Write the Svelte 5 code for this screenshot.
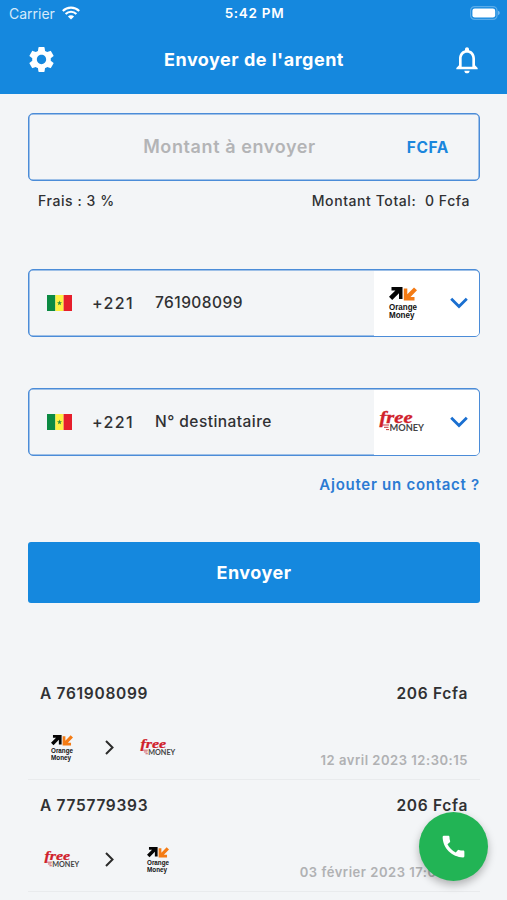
<script>
  let dialCode = "+221";

  let accounts = [
    { value: "761908099", operator: "orange" },
    { value: "N° destinataire", operator: "free" },
  ];

  let transfers = [
    {
      label: "A 761908099",
      amount: "206 Fcfa",
      from: "orange",
      to: "free",
      date: "12 avril 2023 12:30:15",
    },
    {
      label: "A 775779393",
      amount: "206 Fcfa",
      from: "free",
      to: "orange",
      date: "03 février 2023 17:08:42",
    },
  ];
</script>

{#snippet logo(operator)}
  {#if operator === "orange"}
    <svg class="logo-orange" viewBox="0 0 28 33">
      <path d="M2.5 0H13.5V12H10V6.2L3.2 13L0 9.8L6.4 3.5H2.5Z" fill="#050505" />
      <path d="M25.5 13.5H14.8V1.5H18.3V7.3L25 0.4L28 3.2L21.5 10H25.5Z" fill="#f47b14" />
      <text x="0" y="23.4" textLength="28" lengthAdjust="spacingAndGlyphs">Orange</text>
      <text x="0" y="31.4" textLength="25.5" lengthAdjust="spacingAndGlyphs">Money</text>
    </svg>
  {:else}
    <svg class="logo-free" viewBox="0 0 46 20">
      <text class="free" x="0.5" y="10.8" textLength="33" lengthAdjust="spacingAndGlyphs">free</text>
      <path d="M2.5 13H10M5 15.3H9.5M7 17.6H10" stroke="#c8333a" stroke-width="1" />
      <text class="money" x="10.5" y="19.4" textLength="34.5" lengthAdjust="spacingAndGlyphs">MONEY</text>
    </svg>
  {/if}
{/snippet}

<div class="screen">
  <header>
    <div class="status">
      <div class="carrier">
        <span>Carrier</span>
        <svg width="18" height="14" viewBox="0 0 18 14" fill="none" stroke="#fff" stroke-width="2.1">
          <path d="M0.8 4.9A11.8 11.8 0 0 1 17.2 4.9" />
          <path d="M3.6 8A7.7 7.7 0 0 1 14.4 8" />
          <path d="M9 13.6L5.9 10.5A4.4 4.4 0 0 1 12.1 10.5Z" fill="#fff" stroke="none" />
        </svg>
      </div>
      <div class="time">5:42 PM</div>
      <div class="battery">
        <svg width="30" height="14" viewBox="0 0 30 14">
          <rect x="0.6" y="0.6" width="26.4" height="12.8" rx="4" fill="none" stroke="#5aace9" stroke-width="1.2" />
          <rect x="2.4" y="2.4" width="22.8" height="9.2" rx="2.3" fill="#fff" />
          <path d="M28 4.8Q29.8 5.4 29.8 7T28 9.2Z" fill="#73b9ee" />
        </svg>
      </div>
    </div>
    <div class="appbar">
      <svg width="31" height="31" viewBox="0 0 24 24" fill="#fff">
        <path
          d="M19.14 12.94c.04-.3.06-.61.06-.94 0-.32-.02-.64-.07-.94l2.03-1.58a.49.49 0 0 0 .12-.61l-1.92-3.32a.488.488 0 0 0-.59-.22l-2.39.96c-.5-.38-1.03-.7-1.62-.94l-.36-2.54a.484.484 0 0 0-.48-.41h-3.84c-.24 0-.43.17-.47.41l-.36 2.54c-.59.24-1.13.57-1.62.94l-2.39-.96c-.22-.08-.47 0-.59.22L2.74 8.87c-.12.21-.08.47.12.61l2.03 1.58c-.05.3-.09.63-.09.94s.02.64.07.94l-2.03 1.58a.49.49 0 0 0-.12.61l1.92 3.32c.12.22.37.29.59.22l2.39-.96c.5.38 1.03.7 1.62.94l.36 2.54c.05.24.24.41.48.41h3.84c.24 0 .44-.17.47-.41l.36-2.54c.59-.24 1.13-.56 1.62-.94l2.39.96c.22.08.47 0 .59-.22l1.92-3.32c.12-.22.07-.47-.12-.61l-2.01-1.58zM12 15.6c-1.98 0-3.6-1.62-3.6-3.6s1.62-3.6 3.6-3.6 3.6 1.62 3.6 3.6-1.62 3.6-3.6 3.6z"
        />
      </svg>
      <h1>Envoyer de l'argent</h1>
      <svg width="32" height="32" viewBox="0 0 24 24" fill="#fff">
        <path
          d="M12 22c1.1 0 2-.9 2-2h-4c0 1.1.9 2 2 2zm6-6v-5c0-3.07-1.63-5.64-4.5-6.32V4c0-.83-.67-1.5-1.5-1.5s-1.5.67-1.5 1.5v.68C7.64 5.36 6 7.92 6 11v5l-2 2v1h16v-1l-2-2zm-2 1H8v-6c0-2.48 1.51-4.5 4-4.5s4 2.02 4 4.5v6z"
        />
      </svg>
    </div>
  </header>

  <main>
    <div class="field amount">
      <span class="placeholder">Montant à envoyer</span>
      <span class="currency">FCFA</span>
    </div>
    <div class="fees">
      <span>Frais : 3 %</span>
      <span class="total">Montant Total:&nbsp; 0 Fcfa</span>
    </div>

    {#each accounts as account}
      <div class="field account">
        <svg class="flag" width="25" height="16" viewBox="0 0 25 16">
          <rect width="8.4" height="16" fill="#0b8a43" />
          <rect x="8.4" width="8.2" height="16" fill="#fdf042" />
          <rect x="16.6" width="8.4" height="16" fill="#e61e2b" />
          <path
            d="M12.5 5.5L13.1 7.3H15L13.5 8.4L14.1 10.3L12.5 9.2L10.9 10.3L11.5 8.4L10 7.3H11.9Z"
            fill="#2c8b3d"
          />
        </svg>
        <span class="dial">{dialCode}</span>
        <span class="value">{account.value}</span>
        <div class="operator {account.operator}">
          <div class="mark">{@render logo(account.operator)}</div>
          <svg width="18" height="12" viewBox="0 0 18 12" fill="none" stroke="#1a6fd0" stroke-width="2.8">
            <path d="M1.2 1.8L9 9.6L16.8 1.8" />
          </svg>
        </div>
      </div>
    {/each}

    <div class="add-contact">Ajouter un contact ?</div>
    <button>Envoyer</button>

    <div class="transfers">
      {#each transfers as transfer}
        <div class="transfer">
          <div class="line">
            <span>{transfer.label}</span>
            <span class="sum">{transfer.amount}</span>
          </div>
          <div class="route">
            <div class="small {transfer.from}">{@render logo(transfer.from)}</div>
            <svg width="9" height="15" viewBox="0 0 9 15" fill="none" stroke="#2b2b2b" stroke-width="2">
              <path d="M1 1L7.5 7.5L1 14" />
            </svg>
            <div class="small {transfer.to}">{@render logo(transfer.to)}</div>
            <span class="date">{transfer.date}</span>
          </div>
        </div>
      {/each}
    </div>
  </main>

  <div class="call">
    <svg width="29" height="29" viewBox="0 0 24 24" fill="#fff">
      <path
        d="M20.01 15.38c-1.23 0-2.42-.2-3.53-.56a.977.977 0 0 0-1.01.24l-1.57 1.97c-2.83-1.35-5.48-3.9-6.89-6.83l1.95-1.66c.27-.28.35-.67.24-1.02-.37-1.11-.56-2.3-.56-3.53 0-.54-.45-.99-.99-.99H4.19C3.65 3 3 3.24 3 3.99 3 13.28 10.73 21 20.01 21c.71 0 .99-.63.99-1.18v-3.45c0-.54-.45-.99-.99-.99z"
      />
    </svg>
  </div>
</div>

<style>
  :global(body) {
    overflow: hidden;
  }

  .screen {
    position: relative;
    box-sizing: border-box;
    width: 507px;
    height: 900px;
    overflow: hidden;
    background: #f3f5f7;
    color: #303133;
    font-family: Inter, sans-serif;
    white-space: nowrap;
  }

  svg {
    display: block;
    flex: none;
    overflow: visible;
  }

  header {
    height: 94px;
    background: #1588de;
    color: #fff;
  }

  .status {
    display: grid;
    grid-template-columns: 1fr auto 1fr;
    align-items: center;
    height: 26px;
    padding: 0 7px 0 9px;
  }

  .carrier {
    display: flex;
    align-items: center;
    gap: 7px;
    font-size: 14px;
    color: #d5eafa;
  }

  .time {
    font-size: 13.5px;
    font-weight: 600;
    letter-spacing: 0.7px;
  }

  .battery {
    display: flex;
    justify-content: flex-end;
  }

  .appbar {
    display: flex;
    align-items: center;
    justify-content: space-between;
    height: 67px;
    padding: 0 24px 0 26px;
  }

  h1 {
    margin: 0;
    font-size: 18px;
    font-weight: 700;
    letter-spacing: 0.5px;
  }

  main {
    padding: 19px 27px 0 28px;
  }

  .field {
    display: flex;
    align-items: center;
    box-sizing: border-box;
    height: 68px;
    border: 1px solid #4b8cd8;
    border-radius: 5px;
    box-shadow: inset 0 0 0 0.5px #4b8cd8;
  }

  .amount {
    justify-content: flex-end;
    padding: 0 30px 2px 0;
  }

  .placeholder {
    margin-right: 91px;
    font-size: 18px;
    font-weight: 600;
    letter-spacing: 0.6px;
    color: #b3b4b6;
  }

  .currency {
    padding-top: 2px;
    font-size: 15.5px;
    font-weight: 700;
    letter-spacing: 0.6px;
    color: #1a86dd;
  }

  .fees {
    display: flex;
    justify-content: space-between;
    height: 20px;
    margin-top: 10px;
    margin-bottom: 58px;
    padding: 0 10px;
    font-size: 14px;
    font-weight: 500;
    line-height: 20px;
    letter-spacing: 0.58px;
  }

  .account {
    padding-left: 18px;
    margin-bottom: 51px;
  }

  .dial {
    width: 63px;
    margin-left: 20px;
    font-size: 16px;
    font-weight: 500;
    letter-spacing: 1.4px;
  }

  .value {
    flex: 1;
    padding-bottom: 2px;
    font-size: 15.5px;
    font-weight: 500;
    letter-spacing: 0.45px;
  }

  .operator {
    display: flex;
    align-items: center;
    justify-content: space-between;
    box-sizing: border-box;
    width: 105px;
    height: 65px;
    padding-right: 11px;
    border-radius: 0 4px 4px 0;
    background: #fff;
  }

  .mark {
    width: 28px;
    margin-left: 15px;
  }

  .free .mark {
    width: 46px;
    margin-left: 5px;
  }

  .logo-orange,
  .logo-free {
    width: 100%;
  }

  .logo-orange text {
    font-family: "Liberation Sans", sans-serif;
    font-size: 8.6px;
    font-weight: 700;
    fill: #111;
  }

  .logo-free .free {
    font-family: "Liberation Serif", serif;
    font-size: 16px;
    font-style: italic;
    font-weight: 700;
    fill: #d0202a;
    stroke: #d0202a;
    stroke-width: 0.3px;
  }

  .logo-free .money {
    font-family: Lato, sans-serif;
    font-size: 9.5px;
    font-weight: 700;
    fill: #444;
  }

  .add-contact {
    margin-top: -32px;
    font-size: 15px;
    font-weight: 600;
    line-height: 20px;
    letter-spacing: 0.73px;
    text-align: right;
    color: #2b7bd3;
  }

  button {
    display: block;
    width: 100%;
    height: 61px;
    margin-top: 47px;
    border: 0;
    border-radius: 3px;
    background: #1588de;
    color: #fff;
    font: 700 18px Inter, sans-serif;
    letter-spacing: 0.5px;
  }

  .transfers {
    margin-top: 65px;
  }

  .transfer {
    box-sizing: border-box;
    height: 112px;
    padding: 14px 12px 0;
    border-bottom: 1px solid #e9ebed;
  }

  .line {
    display: flex;
    justify-content: space-between;
    font-size: 15.5px;
    font-weight: 600;
    line-height: 24px;
    letter-spacing: 0.7px;
  }

  .route {
    display: flex;
    align-items: center;
    height: 49px;
    margin-top: 17px;
  }

  .small {
    display: flex;
    justify-content: center;
    width: 44px;
    margin-right: 21px;
  }

  .small.orange :global(svg) {
    width: 22px;
  }

  .small.free :global(svg) {
    width: 36px;
  }

  svg + .small {
    margin: 0 0 0 22px;
  }

  .date {
    margin-left: auto;
    padding-top: 25px;
    font-size: 13px;
    font-weight: 600;
    letter-spacing: 0.53px;
    color: #b0b1b3;
  }

  .call {
    position: absolute;
    right: 19px;
    bottom: 19px;
    display: flex;
    align-items: center;
    justify-content: center;
    width: 69px;
    height: 69px;
    border-radius: 50%;
    background: #22b455;
    box-shadow: 0 4px 8px rgba(0, 0, 0, 0.28);
  }
</style>
